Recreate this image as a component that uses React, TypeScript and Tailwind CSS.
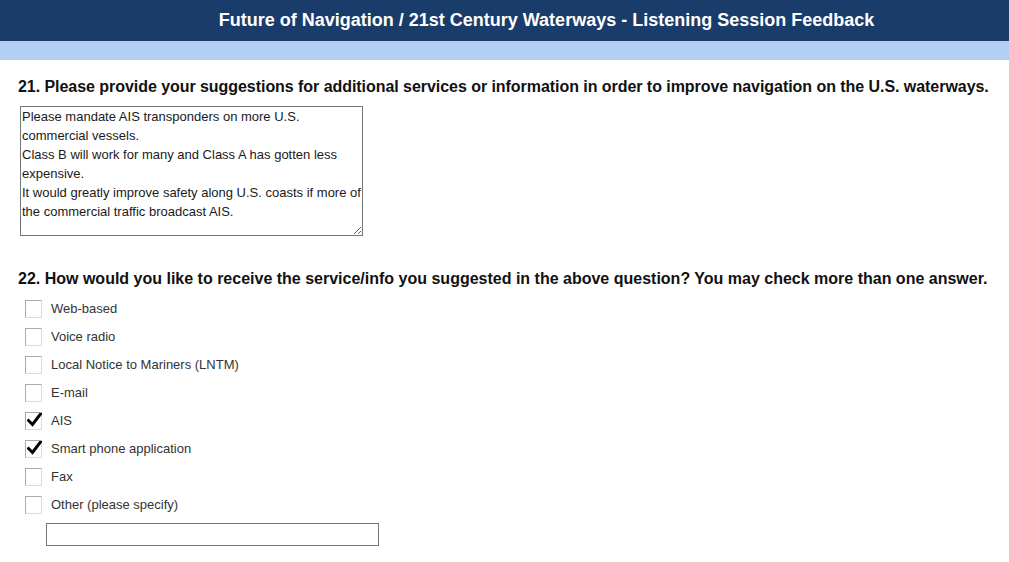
import { useState } from "react";

const options = [
  { label: "Web-based", checked: false },
  { label: "Voice radio", checked: false },
  { label: "Local Notice to Mariners (LNTM)", checked: false },
  { label: "E-mail", checked: false },
  { label: "AIS", checked: true },
  { label: "Smart phone application", checked: true },
  { label: "Fax", checked: false },
  { label: "Other (please specify)", checked: false },
];

// line breaks as the browser wrapped them in the original form
const suggestion =
  "Please mandate AIS transponders on more U.S.\ncommercial vessels.\nClass B will work for many and Class A has gotten less\nexpensive.\nIt would greatly improve safety along U.S. coasts if more of\nthe commercial traffic broadcast AIS.";

function Box({ checked, onClick }: { checked: boolean; onClick: () => void }) {
  return (
    <span
      onClick={onClick}
      className="relative flex h-[18px] w-[17px] shrink-0 cursor-pointer items-center justify-center border border-t-[#a9a9a9] border-l-[#a9a9a9] border-r-[#dcdcdc] border-b-[#dcdcdc] bg-white"
    >
      {checked && (
        <svg width="15" height="14" viewBox="0 0 15 14" className="absolute left-[1px] top-[0px]">
          <path d="M1.5 7.5 L5.5 11.5 L13.5 1" fill="none" stroke="#000" strokeWidth="3" strokeLinecap="square" />
        </svg>
      )}
    </span>
  );
}

export default function App() {
  const [text, setText] = useState(suggestion);
  const [checks, setChecks] = useState(options.map((o) => o.checked));
  const [other, setOther] = useState("");

  return (
    <div className="min-h-[562px] bg-white font-['Liberation_Sans',Arial,sans-serif]">
      <div className="flex h-[41px] items-center justify-center bg-[#1a3c6a] pl-[84px]">
        <h1 className="text-[18px] font-bold text-white">
          Future of Navigation / 21st Century Waterways - Listening Session Feedback
        </h1>
      </div>
      <div className="h-[19px] bg-[#b3cff2]" />

      <div className="px-[18px] pt-[18px]">
        <h2 className="whitespace-nowrap text-[16px] leading-[18px] font-bold tracking-[-0.05px] text-[#111]">
          21. Please provide your suggestions for additional services or information in order to improve navigation on the U.S. waterways.
        </h2>
        <textarea
          value={text}
          wrap="off"
          onChange={(e) => setText(e.target.value)}
          className="mt-[10px] ml-[2px] block h-[130px] w-[343px] resize overflow-hidden border border-[#767676] px-[1px] py-0 text-[13px] leading-[19px] text-[#1a1a1a] outline-none"
        />

        <h2 className="mt-[34px] text-[16px] leading-[18px] font-bold text-[#111]">
          22. How would you like to receive the service/info you suggested in the above question? You may check more than one answer.
        </h2>

        <div className="mt-[12px] flex flex-col gap-[10px] pl-[7px]">
          {options.map((o, i) => (
            <label key={o.label} className="flex h-[18px] items-center gap-[9px]">
              <Box
                checked={checks[i]}
                onClick={() => setChecks(checks.map((c, j) => (j === i ? !c : c)))}
              />
              <span className="text-[13px] text-[#333]">{o.label}</span>
            </label>
          ))}
        </div>

        <input
          value={other}
          onChange={(e) => setOther(e.target.value)}
          className="mt-[9px] ml-[28px] block h-[23px] w-[333px] border border-[#767676] px-1 text-[13px] outline-none"
        />
      </div>
    </div>
  );
}
